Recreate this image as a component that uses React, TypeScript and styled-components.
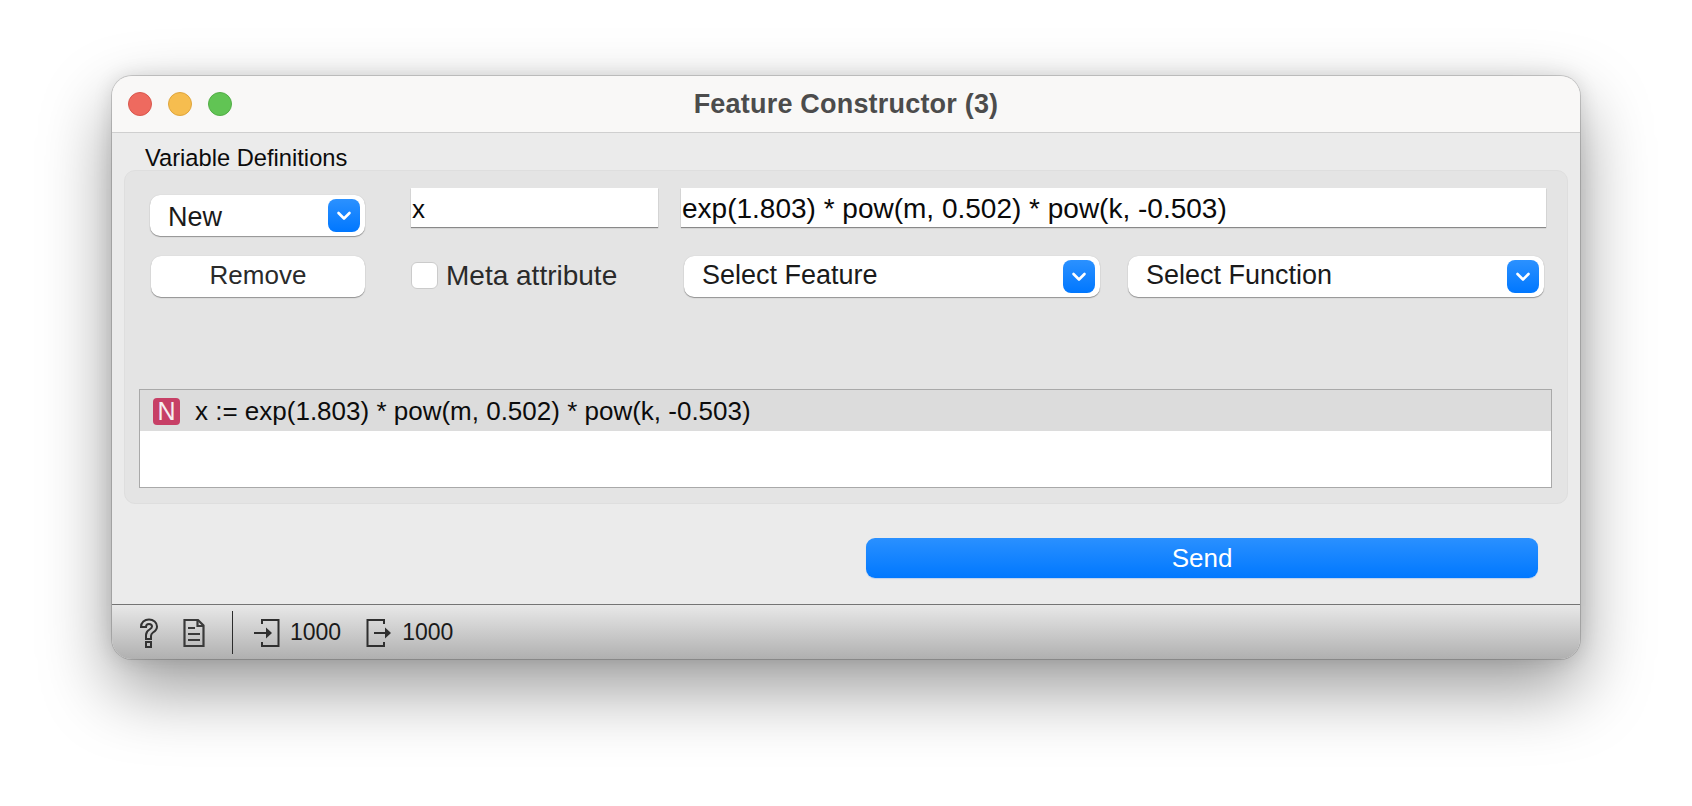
// App.tsx
import React from 'react';
import styled, { createGlobalStyle } from 'styled-components';

const GlobalStyle = createGlobalStyle`
  html, body {
    margin: 0;
    height: 100%;
    background: #ffffff;
    overflow: hidden;
  }
  body {
    font-family: "Liberation Sans", Arial, sans-serif;
  }
`;

const Page = styled.div`
  width: 1692px;
  height: 806px;
  padding: 76px 0 0 112px;
  box-sizing: border-box;
  background: #ffffff;
`;

const Window = styled.div`
  width: 1468px;
  height: 583px;
  box-sizing: border-box;
  border-radius: 20px;
  overflow: hidden;
  display: flex;
  flex-direction: column;
  background: #ebebeb;
  box-shadow: 0 0 0 1px rgba(0, 0, 0, 0.16), 0 30px 70px rgba(0, 0, 0, 0.4), 0 0 20px rgba(0, 0, 0, 0.12);
`;

const TitleBar = styled.div`
  position: relative;
  height: 56px;
  flex: none;
  display: flex;
  align-items: center;
  justify-content: center;
  background: #f9f8f7;
  border-bottom: 1px solid #cfcfcf;
`;

const Lights = styled.div`
  position: absolute;
  left: 16px;
  top: 16px;
  display: flex;
  gap: 16px;
`;

const Light = styled.span<{ $fill: string; $edge: string }>`
  width: 24px;
  height: 24px;
  box-sizing: border-box;
  border-radius: 50%;
  background: ${(p) => p.$fill};
  border: 1px solid ${(p) => p.$edge};
`;

const Title = styled.div`
  font-size: 27px;
  font-weight: 700;
  letter-spacing: 0.2px;
  color: #4c4c4c;
`;

const Body = styled.div`
  flex: 1;
  display: flex;
  flex-direction: column;
  padding: 0 12px;
`;

const GroupLabel = styled.div`
  height: 37px;
  padding: 13px 0 0 21px;
  box-sizing: border-box;
  font-size: 23.7px;
  line-height: 24px;
  color: #0c0c0c;
`;

const Panel = styled.div`
  height: 334px;
  box-sizing: border-box;
  padding: 17px 15px 15px 14px;
  background: #e4e4e4;
  border: 1px solid #dedede;
  border-radius: 11px;
  display: flex;
  flex-direction: column;
`;

const Row = styled.div<{ $top: number }>`
  display: flex;
  align-items: flex-start;
  margin-top: ${(p) => p.$top}px;
`;

const Combo = styled.div<{ $w: number; $ml: number; $pad: number; $mt?: number; $lift: number }>`
  position: relative;
  width: ${(p) => p.$w}px;
  height: 41px;
  margin-left: ${(p) => p.$ml}px;
  margin-top: ${(p) => p.$mt ?? 0}px;
  padding-left: ${(p) => p.$pad}px;
  padding-bottom: ${(p) => Math.max(p.$lift, 0)}px;
  padding-top: ${(p) => Math.max(-p.$lift, 0)}px;
  box-sizing: border-box;
  display: flex;
  align-items: center;
  background: #ffffff;
  border-radius: 10px;
  box-shadow: 0 1px 1px rgba(0, 0, 0, 0.35), 0 0 1px rgba(0, 0, 0, 0.18);
  font-size: 27px;
  color: #1a1a1a;
`;

const ComboArrow = styled.span`
  position: absolute;
  right: 5px;
  top: 4px;
  width: 32px;
  height: 33px;
  border-radius: 8px;
  background: linear-gradient(#2b91ff, #0077ff);
  display: flex;
  align-items: center;
  justify-content: center;
`;

const TextField = styled.div<{ $w: number; $ml: number; $size: number }>`
  width: ${(p) => p.$w}px;
  height: 39px;
  margin-left: ${(p) => p.$ml}px;
  padding: 3px 0 0 1px;
  box-sizing: border-box;
  display: flex;
  align-items: center;
  background: #ffffff;
  box-shadow: 0 1px 1px rgba(0, 0, 0, 0.4);
  font-size: ${(p) => p.$size}px;
  color: #0a0a0a;
`;

const PushButton = styled.div`
  width: 214px;
  height: 41px;
  margin-left: 12px;
  padding-bottom: 2px;
  box-sizing: border-box;
  display: flex;
  align-items: center;
  justify-content: center;
  background: #ffffff;
  border-radius: 10px;
  box-shadow: 0 1px 1px rgba(0, 0, 0, 0.35), 0 0 1px rgba(0, 0, 0, 0.18);
  font-size: 26px;
  color: #2a2a2a;
`;

const CheckWrap = styled.div`
  width: 273px;
  height: 41px;
  margin-left: 46px;
  padding-bottom: 2px;
  box-sizing: border-box;
  display: flex;
  align-items: center;
  gap: 8px;
  font-size: 28px;
  color: #2a2a2a;
`;

const CheckBox = styled.span`
  width: 27px;
  height: 27px;
  flex: none;
  box-sizing: border-box;
  background: #ffffff;
  border: 1px solid #cbcbcb;
  border-radius: 6px;
`;

const List = styled.div`
  margin-top: 92px;
  height: 99px;
  box-sizing: border-box;
  background: #ffffff;
  border: 1px solid #a9a9a9;
`;

const ListRow = styled.div`
  height: 41px;
  padding-top: 2px;
  box-sizing: border-box;
  display: flex;
  align-items: center;
  padding-left: 13px;
  gap: 15px;
  background: #dcdcdc;
  font-size: 26px;
  color: #0c0c0c;
`;

const Badge = styled.span`
  width: 27px;
  height: 27px;
  border-radius: 4px;
  background: #c73f66;
  color: #f6eef1;
  display: flex;
  align-items: center;
  justify-content: center;
  font-size: 25px;
`;

const SendRow = styled.div`
  height: 100px;
  padding: 34px 30px 0 0;
  box-sizing: border-box;
  display: flex;
  justify-content: flex-end;
`;

const SendButton = styled.div`
  width: 672px;
  height: 40px;
  border-radius: 9px;
  background: linear-gradient(#2a90ff, #0078ff);
  box-shadow: 0 1px 1px rgba(0, 110, 255, 0.2);
  display: flex;
  align-items: center;
  justify-content: center;
  color: #ffffff;
  font-size: 26px;
`;

const StatusBar = styled.div`
  height: 56px;
  flex: none;
  box-sizing: border-box;
  border-top: 1px solid #747474;
  background: linear-gradient(#e8e8e8, #afafaf);
  display: flex;
  align-items: center;
  padding-left: 27px;
  font-size: 23px;
  color: #1a1a1a;
`;

const IconSlot = styled.span<{ $w: number; $ml: number }>`
  width: ${(p) => p.$w}px;
  height: 30px;
  margin-left: ${(p) => p.$ml}px;
  flex: none;
  display: flex;
`;

const StatusDivider = styled.span`
  width: 1px;
  height: 43px;
  margin-left: 27px;
  background: #2c2c2c;
`;

const Count = styled.span`
  margin-left: 10px;
`;

const Chevron = () => (
  <svg width="18" height="14" viewBox="0 0 18 14">
    <path d="M3.5 4 L9 9.5 L14.5 4" fill="none" stroke="#ffffff" strokeWidth="2.6" strokeLinecap="round" strokeLinejoin="round" />
  </svg>
);

const HelpIcon = () => (
  <svg width="20" height="30" viewBox="0 0 20 30" fill="none" stroke="#333333" strokeWidth="2">
    <path d="M2 9 C2 4.5 5.5 1.5 10 1.5 C14.5 1.5 18 4.5 18 8.5 C18 11.5 16.5 13 14 14.5 C12.5 15.5 12 16.5 12 18 L12 21 L7 21 L7 17 C7 14.5 8 13 10.5 11.5 C12 10.5 13 9.8 13 8.5 C13 7 11.7 6 10 6 C8.2 6 7 7.3 7 9 Z" />
    <rect x="7" y="24" width="5" height="5" />
  </svg>
);

const DocIcon = () => (
  <svg width="22" height="30" viewBox="0 0 22 30" fill="none" stroke="#3a3a3a" strokeWidth="2.2">
    <path d="M1.5 2 L15 2 L20.5 7.5 L20.5 28 L1.5 28 Z" />
    <path d="M14.5 2 L14.5 8 L20.5 8" />
    <path d="M5 10 L12 10 M5 16 L17 16 M5 22 L17 22" />
  </svg>
);

const InputIcon = () => (
  <svg width="26" height="30" viewBox="0 0 26 30" fill="none" stroke="#2f2f2f" strokeWidth="2">
    <path d="M8 6 L8 2 L24.5 2 L24.5 28 L8 28 L8 24" />
    <path d="M0 15 L13 15" />
    <path d="M12 9.5 L18 15 L12 20.5 Z" fill="#2f2f2f" stroke="none" />
  </svg>
);

const OutputIcon = () => (
  <svg width="26" height="30" viewBox="0 0 26 30" fill="none" stroke="#2f2f2f" strokeWidth="2">
    <path d="M18 6 L18 2 L1.5 2 L1.5 28 L18 28 L18 24" />
    <path d="M8 15 L20 15" />
    <path d="M19 9.5 L25 15 L19 20.5 Z" fill="#2f2f2f" stroke="none" />
  </svg>
);

const App = () => {
  return (
    <Page>
      <GlobalStyle />
      <Window>
        <TitleBar>
          <Lights>
            <Light $fill="#ee6a5f" $edge="#d9574d" />
            <Light $fill="#f6bd4f" $edge="#dfa53c" />
            <Light $fill="#61c454" $edge="#52ad46" />
          </Lights>
          <Title>Feature Constructor (3)</Title>
        </TitleBar>
        <Body>
          <GroupLabel>Variable Definitions</GroupLabel>
          <Panel>
            <Row $top={0}>
              <Combo $w={215} $ml={11} $pad={18} $mt={7} $lift={-4}>
                New
                <ComboArrow>
                  <Chevron />
                </ComboArrow>
              </Combo>
              <TextField $w={247} $ml={46} $size={26}>x</TextField>
              <TextField $w={865} $ml={23} $size={28}>exp(1.803) * pow(m, 0.502) * pow(k, -0.503)</TextField>
            </Row>
            <Row $top={20}>
              <PushButton>Remove</PushButton>
              <CheckWrap>
                <CheckBox />
                Meta attribute
              </CheckWrap>
              <Combo $w={416} $ml={0} $pad={18} $lift={2}>
                Select Feature
                <ComboArrow>
                  <Chevron />
                </ComboArrow>
              </Combo>
              <Combo $w={416} $ml={28} $pad={18} $lift={2}>
                Select Function
                <ComboArrow>
                  <Chevron />
                </ComboArrow>
              </Combo>
            </Row>
            <List>
              <ListRow>
                <Badge>N</Badge>
                x := exp(1.803) * pow(m, 0.502) * pow(k, -0.503)
              </ListRow>
            </List>
          </Panel>
          <SendRow>
            <SendButton>Send</SendButton>
          </SendRow>
        </Body>
        <StatusBar>
          <IconSlot $w={20} $ml={0}>
            <HelpIcon />
          </IconSlot>
          <IconSlot $w={22} $ml={24}>
            <DocIcon />
          </IconSlot>
          <StatusDivider />
          <IconSlot $w={26} $ml={21}>
            <InputIcon />
          </IconSlot>
          <Count>1000</Count>
          <IconSlot $w={26} $ml={25}>
            <OutputIcon />
          </IconSlot>
          <Count>1000</Count>
        </StatusBar>
      </Window>
    </Page>
  );
};

export default App;
